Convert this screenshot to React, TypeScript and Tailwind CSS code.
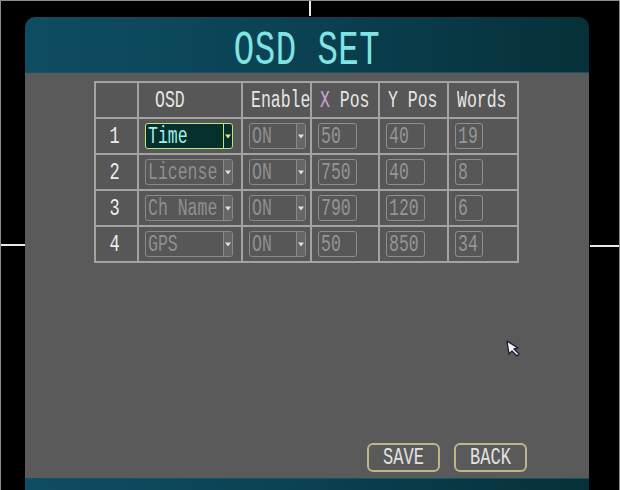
import React from "react";

const font = "font-['Liberation_Mono',_'DejaVu_Sans_Mono',_monospace]";

function Tall({ children, className = "" }: { children: React.ReactNode; className?: string }) {
  return <span className={`inline-block origin-center scale-y-[1.4] ${className}`}>{children}</span>;
}

function Arrow({ color }: { color: string }) {
  return (
    <svg width="6" height="5" viewBox="0 0 6 5">
      <polygon points="0,0.5 6,0.5 3,4.5" fill={color} />
    </svg>
  );
}

function Select({ label, active = false, width }: { label: string; active?: boolean; width: string }) {
  return (
    <div
      className={`flex h-[26px] ${width} rounded-[3px] border-[1.5px] ${
        active ? "border-[#bde27e] bg-[#06302b] text-[#9ff0ec]" : "border-[#8a8a8a] text-[#8f8f8f]"
      }`}
    >
      <div className="flex flex-1 items-center whitespace-nowrap pl-[2px] text-[16.5px] leading-[17px]">
        <Tall>{label}</Tall>
      </div>
      <div
        className={`flex w-[9px] shrink-0 items-center justify-center rounded-r-[2px] border-l-[1.5px] ${
          active ? "border-[#bde27e]" : "border-[#8a8a8a] bg-[#666]"
        }`}
      >
        <Arrow color={active ? "#e6e46a" : "#e0e0e0"} />
      </div>
    </div>
  );
}

function NumBox({ value, width }: { value: string; width: string }) {
  return (
    <div
      className={`flex h-[26px] ${width} items-center rounded-[3px] border-[1.5px] border-[#8e8e8e] pl-[2px] text-[16.5px] leading-[17px] text-[#959595]`}
    >
      <Tall>{value}</Tall>
    </div>
  );
}

const rows = [
  { n: "1", osd: "Time", x: "50", y: "40", w: "19", active: true },
  { n: "2", osd: "License", x: "750", y: "40", w: "8" },
  { n: "3", osd: "Ch Name", x: "790", y: "120", w: "6" },
  { n: "4", osd: "GPS", x: "50", y: "850", w: "34" },
];

function Cell({ children, className = "" }: { children?: React.ReactNode; className?: string }) {
  return <div className={`flex h-[34px] items-center bg-[#575757] ${className}`}>{children}</div>;
}

function Button({ label }: { label: string }) {
  return (
    <div className="flex h-[29px] w-[73px] items-center justify-center rounded-[6px] border-2 border-[#bcb78a] text-[17px] leading-[17px] text-[#e2e2e2]">
      <Tall>{label}</Tall>
    </div>
  );
}

export default function App() {
  return (
    <div className={`relative h-[490px] w-[620px] overflow-hidden border-l border-r border-t border-[#8c8c8c] bg-black ${font}`}>
      <div className="ml-[24px] mt-[16px] flex w-[564px] flex-col">
        {/* title bar */}
        <div className="flex h-[56px] items-center justify-center rounded-t-[10px] border-b border-[#145462] bg-linear-to-r from-[#0f4d63] via-[#0b4152] to-[#063139] pt-[12px]">
          <Tall className="text-[34px] leading-[34px] tracking-[0.5px] text-[#80e4e2]">OSD SET</Tall>
        </div>

        {/* body */}
        <div className="flex h-[405px] flex-col bg-[#5a5a5a] pl-[69px] pr-[62px] pt-[8px] pb-[6px]">
          <div className="grid w-fit grid-cols-[41px_102px_67px_66px_67px_68px] gap-[2px] bg-[#a3a3a3] p-[2px] text-[16.5px] leading-[17px]">
            <Cell />
            <Cell className="pl-[16px] text-[#e6e6e6]"><Tall>OSD</Tall></Cell>
            <Cell className="overflow-hidden whitespace-nowrap pl-[8px] text-[#e6e6e6]"><Tall>Enable</Tall></Cell>
            <Cell className="whitespace-pre pl-[8px] text-[#e6e6e6]">
              <Tall><span className="text-[#d2a6d6]">X</span> Pos</Tall>
            </Cell>
            <Cell className="whitespace-pre pl-[8px] text-[#e6e6e6]"><Tall>Y Pos</Tall></Cell>
            <Cell className="pl-[8px] text-[#e6e6e6]"><Tall>Words</Tall></Cell>

            {rows.map((r) => (
              <React.Fragment key={r.n}>
                <Cell className="justify-center pr-[4px] text-[17px] text-[#ececec]"><Tall>{r.n}</Tall></Cell>
                <Cell className="pl-[6px]"><Select label={r.osd} active={r.active} width="w-[88px]" /></Cell>
                <Cell className="pl-[6px]"><Select label="ON" width="w-[57px]" /></Cell>
                <Cell className="pl-[6px]"><NumBox value={r.x} width="w-[39px]" /></Cell>
                <Cell className="pl-[6px]"><NumBox value={r.y} width="w-[39px]" /></Cell>
                <Cell className="pl-[6px]"><NumBox value={r.w} width="w-[28px]" /></Cell>
              </React.Fragment>
            ))}
          </div>

          <div className="mt-auto flex justify-end gap-[14px]">
            <Button label="SAVE" />
            <Button label="BACK" />
          </div>
        </div>

        {/* bottom strip */}
        <div className="h-[13px] border-t border-[#145462] bg-linear-to-r from-[#0f4d63] via-[#0b4152] to-[#063139]" />
      </div>

      {/* screen crosshair marks */}
      <div className="absolute left-[308px] top-0 h-[15px] w-[2px] bg-[#e8e8e8]" />
      <div className="absolute left-0 top-[243px] h-[2px] w-[24px] bg-[#e8e8e8]" />
      <div className="absolute right-0 top-[244px] h-[2px] w-[29px] bg-[#e8e8e8]" />

      {/* mouse pointer */}
      <svg className="absolute left-[505px] top-[339px]" width="16" height="17" viewBox="0 0 16 17">
        <path d="M1 1 L12 8 L8 9 L13 14 L11 16 L6 11 L3 14 Z" fill="#f4f4f4" stroke="#1a1f3a" strokeWidth="1.3" strokeLinejoin="round" />
      </svg>
    </div>
  );
}
